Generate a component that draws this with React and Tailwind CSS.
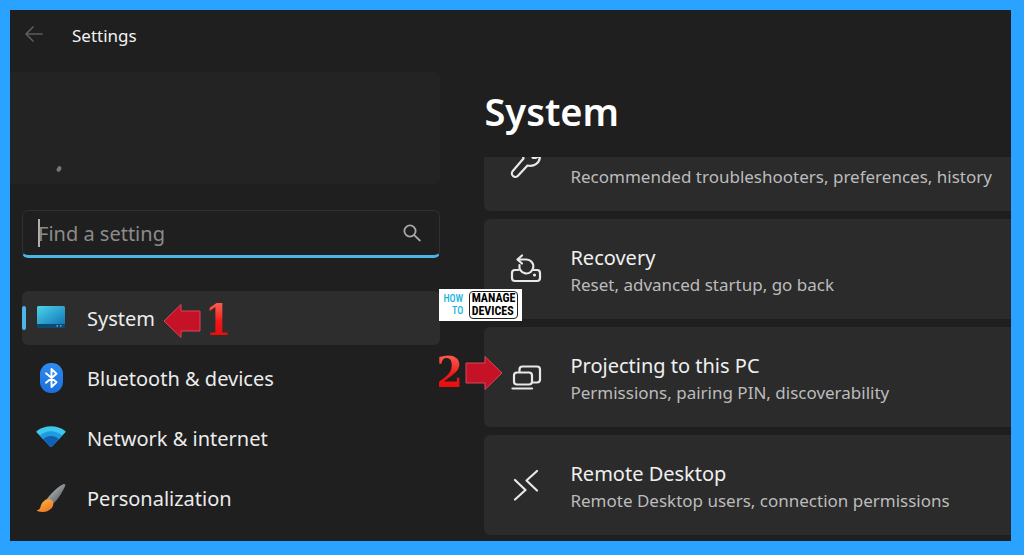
import { useState } from 'react'

function BackIcon() {
  return (
    <svg viewBox="0 0 20 18" className="h-[18px] w-5" fill="none" stroke="currentColor" strokeWidth="1.7" strokeLinecap="round" strokeLinejoin="round">
      <path d="M9 2 2 9l7 7M2 9h16" />
    </svg>
  )
}

function SearchIcon() {
  return (
    <svg viewBox="0 0 18 18" className="h-[18px] w-[18px]" fill="none" stroke="currentColor" strokeWidth="1.8" strokeLinecap="round">
      <circle cx="7" cy="7" r="5.6" />
      <path d="m11.2 11.2 5.6 5.3" />
    </svg>
  )
}

function MonitorIcon() {
  return (
    <svg viewBox="0 0 30 30" className="h-[30px] w-[30px]">
      <defs>
        <linearGradient id="screen" x1="0" y1="0" x2="1" y2="1">
          <stop offset="0" stopColor="#4fd3e8" />
          <stop offset="1" stopColor="#1277b8" />
        </linearGradient>
      </defs>
      <rect x="1" y="3" width="28" height="22" rx="1.5" fill="#0d4a73" />
      <path d="M2.5 3h25A1.5 1.5 0 0 1 29 4.5V21H1V4.5A1.5 1.5 0 0 1 2.5 3Z" fill="url(#screen)" />
      <path d="M20.5 22.3h1.5v1.2h-1.5zM24 22.3h1.5v1.2H24z" fill="#7fc8ea" />
    </svg>
  )
}

function BluetoothIcon() {
  return (
    <svg viewBox="0 0 30 32" className="h-8 w-[30px]">
      <defs>
        <linearGradient id="bt" x1="0" y1="0" x2="0" y2="1">
          <stop offset="0" stopColor="#2f8cf0" />
          <stop offset="1" stopColor="#1a6fdc" />
        </linearGradient>
      </defs>
      <rect x="4" y="1" width="23" height="30" rx="11" fill="url(#bt)" />
      <path d="m10 11.3 10.5 9L15.5 25V7l5 4.7L10 20.7" fill="none" stroke="#fff" strokeWidth="1.9" strokeLinejoin="round" strokeLinecap="round" />
    </svg>
  )
}

function WifiIcon() {
  return (
    <svg viewBox="0 0 30 30" className="h-[30px] w-[30px]">
      <defs>
        <clipPath id="fan">
          <path d="M.8 9.5Q0 8.7.8 8C9 1.8 21 1.8 29.2 8q.8.7 0 1.5L16 23.5q-1 1-2 0Z" />
        </clipPath>
      </defs>
      <g clipPath="url(#fan)">
        <rect width="30" height="30" fill="#3cc8ee" />
        <circle cx="15" cy="24" r="15.8" fill="#1f9be0" />
        <circle cx="15" cy="24" r="11" fill="#1160b4" />
      </g>
    </svg>
  )
}

function BrushIcon() {
  return (
    <svg viewBox="0 0 32 32" className="h-8 w-[30px]">
      <defs>
        <linearGradient id="handle" x1="0" y1="0" x2="1" y2="1">
          <stop offset="0.2" stopColor="#b4b8ba" />
          <stop offset="0.8" stopColor="#5e6366" />
        </linearGradient>
        <linearGradient id="bristle" x1="0" y1="0" x2="0.6" y2="1">
          <stop offset="0" stopColor="#ffb84a" />
          <stop offset="1" stopColor="#ee7a22" />
        </linearGradient>
      </defs>
      <path d="M29 1.2c1.6-.7 2.7.4 2.1 1.9-2.5 5.9-7.1 13.4-12.3 18.5l-7-4.8C16 11 22.5 4.4 29 1.2Z" fill="url(#handle)" />
      <path d="M9.5 18.3c2.5-2.2 7.4-1.1 8.6 1.8 1.9 4.7-3.6 10.9-11 10.9-3.2 0-5.3-.6-6.5-1.8 3.6-.7 3.9-2.2 4.6-5.1.5-2.4 2-4 4.3-5.8Z" fill="url(#bristle)" />
    </svg>
  )
}

function WrenchIcon() {
  return (
    <svg viewBox="0 0 32 32" className="h-8 w-8" fill="none" stroke="currentColor" strokeWidth="2.2" strokeLinejoin="round" strokeLinecap="round">
      <path d="M25 1.5A8.5 8.5 0 0 0 13.5 11.5L2.8 24a3.5 3.5 0 0 0 5.2 4.8l9.5-10.3c6 1.3 12.5-1.5 12.5-10L25.5 11H23l-2.5-4L25 1.5Z" />
    </svg>
  )
}

function RecoveryIcon() {
  return (
    <svg viewBox="0 0 32 32" className="h-8 w-8" fill="none" stroke="currentColor" strokeWidth="2.2" strokeLinejoin="round" strokeLinecap="round">
      <path d="M8.5 17H5a3 3 0 0 0-3 3v5a3 3 0 0 0 3 3h22a3 3 0 0 0 3-3v-5a3 3 0 0 0-3-3h-3.5" />
      <path d="M8 6.5h8.5a7 7 0 1 1-7 5.5" />
      <path d="m12 2.5-4.5 4 4.5 4" />
      <circle cx="24.5" cy="22" r="0.8" fill="currentColor" strokeWidth="1.5" />
    </svg>
  )
}

function ProjectIcon() {
  return (
    <svg viewBox="0 0 32 32" className="h-8 w-8" fill="none" stroke="currentColor" strokeWidth="2.2" strokeLinejoin="round" strokeLinecap="round">
      <path d="M9.5 10.5v-2a3 3 0 0 1 3-3H27a3 3 0 0 1 3 3v10a3 3 0 0 1-3 3h-4.5" />
      <rect x="4" y="11.5" width="18" height="12" rx="3" />
      <path d="M2.5 27.5H22" />
    </svg>
  )
}

function RemoteIcon() {
  return (
    <svg viewBox="0 0 32 32" className="h-8 w-8" fill="none" stroke="currentColor" strokeWidth="2.2" strokeLinejoin="round" strokeLinecap="round">
      <path d="m5 11 10.5 10L5 30.5" />
      <path d="M27 2 16.5 11.500 27 21.500" />
    </svg>
  )
}

function RedArrow({ flip }) {
  return (
    <svg viewBox="0 0 38 36" className={flip ? 'h-9 w-[38px] rotate-180' : 'h-9 w-[38px]'}>
      <path d="M1 18 18 1.5V8h19v20H18v6.5Z" fill="#c51226" stroke="#d9465a" strokeWidth="1" strokeLinejoin="round" />
    </svg>
  )
}

function StepNumber({ children }) {
  return (
    <span className="bg-linear-to-b from-[#ff5a50] via-[#f01818] to-[#e80808] bg-clip-text font-['DejaVu_Serif_Condensed','DejaVu_Serif',serif] text-[42px] leading-9 font-bold text-transparent">
      {children}
    </span>
  )
}

function Watermark() {
  return (
    <div className="absolute top-[70px] -left-[45px] z-10 flex h-8 w-[83px] items-center justify-between bg-white px-1 font-['Roboto_Condensed','Liberation_Sans',sans-serif]">
      <div className="text-right text-[10px] leading-[12px] font-medium text-[#19b5e0]">
        <div>HOW</div>
        <div>TO</div>
      </div>
      <div className="rounded-sm border border-[#222] px-0.5 text-[12px] leading-[13px] font-bold text-black">
        <div>MANAGE</div>
        <div>DEVICES</div>
      </div>
    </div>
  )
}

const navItems = [
  { id: 'system', label: 'System', Icon: MonitorIcon },
  { id: 'bluetooth', label: 'Bluetooth & devices', Icon: BluetoothIcon },
  { id: 'network', label: 'Network & internet', Icon: WifiIcon },
  { id: 'personalization', label: 'Personalization', Icon: BrushIcon },
]

const settings = [
  { id: 'recovery', title: 'Recovery', detail: 'Reset, advanced startup, go back', Icon: RecoveryIcon },
  { id: 'projecting', title: 'Projecting to this PC', detail: 'Permissions, pairing PIN, discoverability', Icon: ProjectIcon },
  { id: 'remote', title: 'Remote Desktop', detail: 'Remote Desktop users, connection permissions', Icon: RemoteIcon },
]

function Sidebar({ active, onSelect }) {
  const [query, setQuery] = useState('')

  return (
    <aside className="w-[43%] shrink-0">
      <div className="flex h-28 items-end rounded-r-md bg-[#232323] pb-3 pl-[47px]">
        <span className="h-1.5 w-1 rotate-30 rounded-full bg-[#777]" />
      </div>

      <label className="mt-[26px] ml-3 flex h-12 items-center rounded-md border border-b-3 border-[#303030] border-b-[#4cb4e7] bg-[#1f1f1f] pr-[18px] pl-[15px]">
        <span className="-mr-0.5 h-7 w-0.5 bg-[#b0b0b0]" />
        <input
          type="text"
          aria-label="Find a setting"
          placeholder="Find a setting"
          value={query}
          onChange={(e) => setQuery(e.target.value)}
          className="min-w-0 flex-1 bg-transparent pt-0.5 text-[20px] text-white outline-none placeholder:text-[#8c8c8c]"
        />
        <span className="text-[#a8a8a8]">
          <SearchIcon />
        </span>
      </label>

      <nav className="mt-[33px] ml-3 flex flex-col gap-1.5">
        {navItems.map(({ id, label, Icon }) => (
          <button
            key={id}
            type="button"
            onClick={() => onSelect(id)}
            className={`flex h-[54px] items-center rounded-md text-left text-[20px] text-[#ececec] ${active === id ? 'bg-[#2d2d2d]' : ''}`}
          >
            <span className={`h-6 w-1 rounded-full ${active === id ? 'bg-[#4cb4e7]' : ''}`} />
            <span className="mr-[21px] ml-2.5">
              <Icon />
            </span>
            <span className="pt-0.5">{label}</span>
            {id === 'system' && (
              <span className="ml-2 flex items-center gap-1 pt-1.5">
                <RedArrow />
                <StepNumber>1</StepNumber>
              </span>
            )}
          </button>
        ))}
      </nav>
    </aside>
  )
}

function SettingCard({ title, detail, Icon, children }) {
  return (
    <div className="relative">
      <button type="button" className="flex h-[100px] w-full items-center gap-7 rounded-l-md bg-[#2b2b2b] pl-[26px] text-left">
        <span className="text-[#e8e8e8]">
          <Icon />
        </span>
        <span className="pt-1 whitespace-nowrap">
          <span className="block text-[20px] leading-[27px] text-[#f0f0f0]">{title}</span>
          <span className="block text-[17px] leading-[27px] text-[#bcbcbc]">{detail}</span>
        </span>
      </button>
      {children}
    </div>
  )
}

export default function App() {
  const [active, setActive] = useState('system')

  return (
    <div className="min-h-screen bg-[#2aa2ff] pt-2.5 pr-[13px] pb-3.5 pl-2.5 font-['Noto_Sans',sans-serif]">
      <div className="overflow-hidden bg-[#1f1f1f]">
        <header className="flex h-[62px] items-start gap-7 pt-3 pl-3.5">
          <button type="button" aria-label="Back" className="mt-[3px] text-[#5c5c5c]">
            <BackIcon />
          </button>
          <span className="text-[17px] leading-7 text-[#f2f2f2]">Settings</span>
        </header>

        <div className="flex gap-11">
          <Sidebar active={active} onSelect={setActive} />

          <main className="min-w-0 flex-1">
            <h1 className="mt-3 text-[38px] leading-[54px] font-semibold text-white">System</h1>

            <div className="mt-[19px] flex flex-col gap-2 pb-1.5">
              <button type="button" className="flex h-[54px] w-full items-start gap-7 overflow-hidden rounded-bl-md bg-[#2b2b2b] pl-[26px] text-left">
                <span className="-mt-2.5 text-[#e8e8e8]">
                  <WrenchIcon />
                </span>
                <span className="mt-1.5 text-[17px] leading-[27px] whitespace-nowrap text-[#bcbcbc]">
                  Recommended troubleshooters, preferences, history
                </span>
              </button>

              {settings.map((item) => (
                <SettingCard key={item.id} {...item}>
                  {item.id === 'recovery' && <Watermark />}
                  {item.id === 'projecting' && (
                    <div className="absolute top-7 -left-12 flex items-center gap-0.5">
                      <StepNumber>2</StepNumber>
                      <RedArrow flip />
                    </div>
                  )}
                </SettingCard>
              ))}
            </div>
          </main>
        </div>
      </div>
    </div>
  )
}
